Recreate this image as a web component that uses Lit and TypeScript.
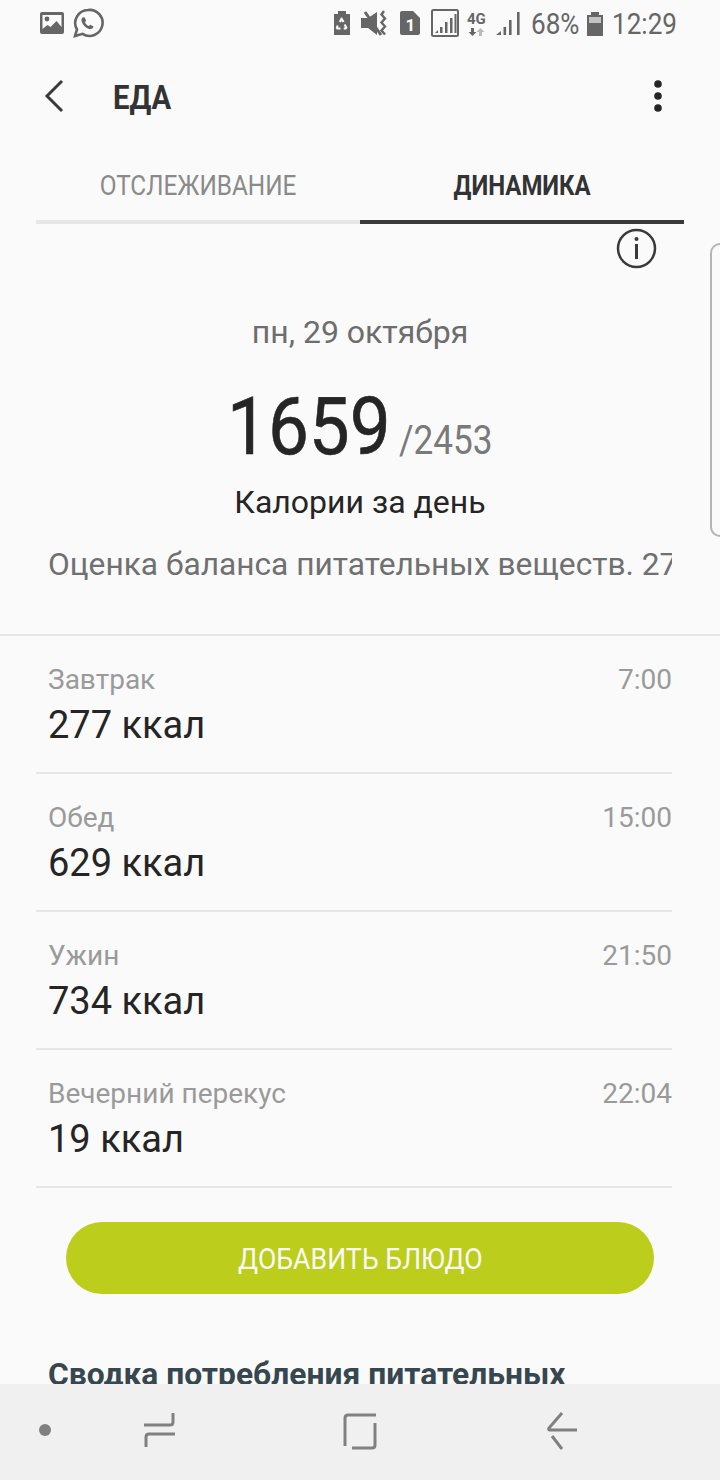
import { LitElement, html, css, svg } from "lit";
import { customElement } from "lit/decorators.js";

const meals = [
  ["Завтрак", "7:00", "277 ккал"],
  ["Обед", "15:00", "629 ккал"],
  ["Ужин", "21:50", "734 ккал"],
  ["Вечерний перекус", "22:04", "19 ккал"],
];

@customElement("app-root")
export class AppRoot extends LitElement {
  static styles = css`
    :host { display: block; width: 720px; height: 1480px; position: relative; overflow: hidden; background: #fafafa; font-family: Roboto, "Noto Sans", sans-serif; color: #252525; }
    svg { display: block; flex: none; }
    .status { height: 48px; display: flex; align-items: center; padding: 0 43px 0 40px; color: #666; }
    .status .spacer { flex: 1; }
    .st-text { font-size: 29px; line-height: 48px; color: #666; display: inline-block; transform-origin: left center; white-space: nowrap; }
    .pct { width: 48px; margin-left: 10px; transform: scaleX(.9); }
    .time { width: 65px; margin-left: 9px; transform: scaleX(.9); }
    .bar { height: 96px; display: flex; align-items: center; padding: 0 58px 0 44px; }
    .title { font-size: 34px; font-weight: 700; color: #333; margin-left: 47px; transform: scaleX(.86); transform-origin: left center; flex: 1; padding-top: 2px; }
    .tabs { display: flex; margin: 0 36px; height: 80px; }
    .tab { flex: 1; display: flex; align-items: center; justify-content: center; font-size: 28px; color: #8a8a8a; border-bottom: 4px solid #e6e6e6; box-sizing: border-box; padding-top: 6px; }
    .tab span { display: inline-block; transform: scaleX(.87); }
    .tab.on { color: #333; font-weight: 700; border-bottom-color: #3a3a3a; }
    .tab.on span { transform: scaleX(.855); }
    .info { display: flex; justify-content: flex-end; padding: 4px 63px 0 0; height: 40px; box-sizing: border-box; }
    .summary { display: flex; flex-direction: column; align-items: center; height: 372px; border-bottom: 2px solid #e6e6e6; box-sizing: border-box; }
    .date { font-size: 32px; color: #6d6d6d; margin-top: 50px; line-height: 36px; }
    .nums { display: flex; align-items: baseline; margin: 30px 1px 0 0; line-height: 94px; width: 266px; }
    .big { font-size: 80px; color: #252525; display: inline-block; width: 160px; transform: scaleX(.91); transform-origin: left center; -webkit-text-stroke: .6px #252525; }
    .goal { font-size: 40px; color: #7a7a7a; margin-left: 12px; }
    .goal span { display: inline-block; transform: scaleX(.88); transform-origin: left center; }
    .cal { font-size: 32px; color: #252525; line-height: 36px; margin-top: -4px; }
    .score { width: 624px; overflow: hidden; white-space: nowrap; font-size: 31.7px; color: #707070; line-height: 38px; margin-top: 26px; }
    .rows { padding: 0 48px 0 36px; }
    .row { height: 138px; box-sizing: border-box; border-bottom: 2px solid #e6e6e6; padding: 27px 0 0 12px; }
    .row-top { display: flex; justify-content: space-between; font-size: 28px; line-height: 34px; color: #9a9a9a; }
    .row-val { font-size: 38px; line-height: 44px; color: #252525; margin-top: 6px; }
    .add { width: 588px; height: 72px; margin: 34px 0 0 66px; background: #bccd1b; border-radius: 36px; display: flex; align-items: center; justify-content: center; color: #fafafa; font-size: 30px; }
    .add span { display: inline-block; transform: scaleX(.89); }
    .heading { font-size: 31.8px; font-weight: 700; color: #37474f; margin: 61px 0 0 48px; line-height: 38px; white-space: nowrap; }
    .nav { position: absolute; left: 0; right: 0; bottom: 0; height: 96px; background: #f0f0f0; }
    .nav svg { position: absolute; left: 0; top: 0; }
    .edge { position: absolute; left: 710px; top: 243px; width: 10px; height: 294px; box-sizing: border-box; border: 2px solid #b4b4b4; border-right: 0; border-radius: 14px 0 0 14px; }
  `;

  statusLeft() {
    return html`<svg width="64" height="48" viewBox="40 0 64 48">
      <rect x="40" y="12" width="24" height="22" rx="2" fill="#666"/>
      <path d="M42.500 15h19v12l-5-6-6 6-3-2-5 4z" fill="#fafafa"/>
      <circle cx="47" cy="19" r="2.400" fill="#666"/>
      <path d="M88 10a13 13 0 0 0-11 19.500L75 36l7.500-2.200A13 13 0 1 0 88 10z" fill="none" stroke="#666" stroke-width="2.600"/>
      <path d="M82.500 17.500c-1.600 1.500-1.400 4 .6 7 2 2.800 5 5 7.600 4.600 1.600-.3 2.600-1.300 2.800-2.600l-3.200-1.800-1.600 1.400c-1.600-.6-3-2.200-3.800-3.900l1.200-1.500-1.500-3.400z" fill="#666"/>
    </svg>`;
  }

  statusRight() {
    return html`<svg width="187" height="48" viewBox="335 0 187 48">
      <path d="M335 14h4v-3h8v3h4v21h-16z" fill="#666"/>
      <path d="M343 17.500l2.500 4-1.800 1-1-1.600-1 1.700-1.800-1 2.100-4.100zM346.500 24l2 3.400-1.200 2h-2.600v-2h1.400l-1.400-2.400zM338 25l1.700 1-.8 1.400h2.600v2h-3.800l-1-1.800z" fill="#fafafa"/>
      <path d="M362 18h7l9-6 0 23-9-7-7 0z" fill="#666"/>
      <path d="M366 12l16 23" stroke="#666" stroke-width="3" fill="none"/>
      <path d="M385 11l-2.500 3.500 3.500 4-3.500 4 3.500 4-3.500 4 3.500 4" fill="none" stroke="#666" stroke-width="2.400"/>
      <path d="M403 11h11l7 7v15a2 2 0 0 1-2 2h-16a2 2 0 0 1-2-2v-20a2 2 0 0 1 2-2z" fill="#666"/>
      <text x="406.500" y="31" font-family="Roboto" font-size="17" font-weight="700" fill="#fafafa">1</text>
      <rect x="433" y="10" width="26" height="26" rx="1.500" fill="none" stroke="#666" stroke-width="2"/>
      <path d="M436 33l3-3v3zM441 33v-6h2.500v6zM446 33v-11h2.500v11zM451 33v-15h2.500v15zM455.500 33v-19h2v19z" fill="#666"/>
      <text x="468" y="24" font-family="Roboto" font-size="15" font-weight="700" fill="#666">4G</text>
      <path d="M472 28h3v4h2.500l-4 4-4-4h2.500z" fill="#666"/>
      <path d="M480 36v-4h-2.500l4-4 4 4h-2.500v4z" fill="#bbb"/>
      <path d="M497 35l5-4v4zM504.500 35v-8h2.600v8zM510 35v-15h2.600v15zM518 35v-23h2.600v23z" fill="#666"/>
    </svg>`;
  }

  nav() {
    return svg`
      <circle cx="45" cy="46" r="6" fill="#808080"/>
      <g fill="none" stroke="#808080" stroke-width="3">
        <path d="M144 41h26q3 0 3-3v-9"/>
        <path d="M175 50h-26q-3 0-3 3v10"/>
        <path d="M376 31h-28q-3 0-3 3v28"/>
        <path d="M375 39v22q0 3-3 3h-20"/>
        <path d="M577 46h-27q-2 0-1-2l13-15"/>
        <path d="M552 52l10 13"/>
      </g>`;
  }

  render() {
    return html`
      <div class="status">
        ${this.statusLeft()}
        <div class="spacer"></div>
        ${this.statusRight()}
        <span class="st-text pct">68%</span>
        <svg width="16" height="24" viewBox="0 0 16 24" style="margin-left:8px">
          <path d="M4 3V0h8v3h4v21H0V3z" fill="#666"/>
          <rect x="2" y="5" width="12" height="6" fill="#c4c4c4"/>
        </svg>
        <span class="st-text time">12:29</span>
      </div>
      <div class="bar">
        <svg width="22" height="34" viewBox="0 0 22 34"><path d="M18 2L3 17l15 15" fill="none" stroke="#3a3a3a" stroke-width="3"/></svg>
        <div class="title">ЕДА</div>
        <svg width="8" height="32" viewBox="0 0 8 32"><circle cx="4" cy="4" r="3.800" fill="#252525"/><circle cx="4" cy="16" r="3.800" fill="#252525"/><circle cx="4" cy="28" r="3.800" fill="#252525"/></svg>
      </div>
      <div class="tabs">
        <div class="tab"><span>ОТСЛЕЖИВАНИЕ</span></div>
        <div class="tab on"><span>ДИНАМИКА</span></div>
      </div>
      <div class="info">
        <svg width="41" height="41" viewBox="0 0 41 41">
          <circle cx="20.500" cy="20.500" r="18.500" fill="none" stroke="#3a3a3a" stroke-width="2.500"/>
          <circle cx="20.500" cy="11" r="2" fill="#3a3a3a"/>
          <rect x="19" y="16" width="3" height="15" fill="#3a3a3a"/>
        </svg>
      </div>
      <div class="summary">
        <div class="date">пн, 29 октября</div>
        <div class="nums"><span class="big">1659</span><span class="goal"><span>/2453</span></span></div>
        <div class="cal">Калории за день</div>
        <div class="score">Оценка баланса питательных веществ. 27</div>
      </div>
      <div class="rows">
        ${meals.map(([n, t, v]) => html`<div class="row"><div class="row-top"><span>${n}</span><span>${t}</span></div><div class="row-val">${v}</div></div>`)}
      </div>
      <div class="add"><span>ДОБАВИТЬ БЛЮДО</span></div>
      <div class="heading">Сводка потребления питательных</div>
      <div class="edge"></div>
      <div class="nav"><svg width="720" height="96" viewBox="0 0 720 96">${this.nav()}</svg></div>
    `;
  }
}
